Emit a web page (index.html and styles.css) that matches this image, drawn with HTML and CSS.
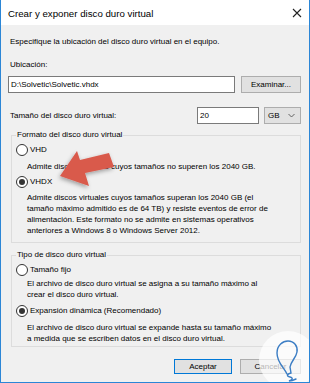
FILE: index.html
```html
<!DOCTYPE html>
<html lang="es">
<head>
    <meta charset="UTF-8">
    <meta name="viewport" content="width=device-width, initial-scale=1.0">
    <title>Crear y exponer disco duro virtual</title>
    <link rel="stylesheet" href="styles.css">
</head>
<body>
    <div class="window">
        <div class="titlebar">
            <span class="title">Crear y exponer disco duro virtual</span>
            <svg class="close" width="10" height="10" viewBox="0 0 10 10">
                <path d="M1 1 L9 9 M9 1 L1 9" stroke="#222" stroke-width="1.1" fill="none"/>
            </svg>
        </div>
        <div class="content">
            <div class="intro">Especifique la ubicación del disco duro virtual en el equipo.</div>
            <div class="label">Ubicación:</div>
            <div class="pathRow">
                <div class="textbox pathBox">D:\Solvetic\Solvetic.vhdx</div>
                <div class="button browseButton">Examinar...</div>
            </div>
            <div class="sizeRow">
                <div class="sizeLabel">Tamaño del disco duro virtual:</div>
                <div class="textbox sizeBox">20</div>
                <div class="select">
                    <span>GB</span>
                    <svg width="7" height="5" viewBox="0 0 7 5">
                        <path d="M0.5 1 L3.5 4 L6.5 1" stroke="#555" stroke-width="0.9" fill="none"/>
                    </svg>
                </div>
            </div>

            <fieldset class="group formatGroup">
                <legend>Formato del disco duro virtual</legend>
                <div class="radioRow firstRadio">
                    <span class="radio"></span>
                    <span>VHD</span>
                </div>
                <div class="desc oneLine">Admite discos virtuales cuyos tamaños no superen los 2040 GB.</div>
                <div class="radioRow">
                    <span class="radio checked"></span>
                    <span>VHDX</span>
                </div>
                <div class="desc">Admite discos virtuales cuyos tamaños superan los 2040 GB (el<br>tamaño máximo admitido es de 64 TB) y resiste eventos de error de<br>alimentación. Este formato no se admite en sistemas operativos<br>anteriores a Windows 8 o Windows Server 2012.</div>
            </fieldset>

            <fieldset class="group typeGroup">
                <legend>Tipo de disco duro virtual</legend>
                <div class="radioRow firstRadio">
                    <span class="radio"></span>
                    <span>Tamaño fijo</span>
                </div>
                <div class="desc fixedDesc">El archivo de disco duro virtual se asigna a su tamaño máximo al<br>crear el disco duro virtual.</div>
                <div class="radioRow dynamicRow">
                    <span class="radio checked"></span>
                    <span>Expansión dinámica (Recomendado)</span>
                </div>
                <div class="desc dynamicDesc">El archivo de disco duro virtual se expande hasta su tamaño máximo<br>a medida que se escriben datos en el disco duro virtual.</div>
            </fieldset>

            <div class="footer">
                <div class="button defaultButton">Aceptar</div>
                <div class="button cancelButton">Cancelar</div>
            </div>
        </div>

        <!-- red arrow pointing at VHDX -->
        <svg class="arrow" width="80" height="60" viewBox="40 140 80 60">
            <defs>
                <filter id="shade" x="-30%" y="-30%" width="160%" height="160%">
                    <feDropShadow dx="-1" dy="2" stdDeviation="2" flood-color="#000" flood-opacity="0.35"/>
                </filter>
            </defs>
            <polygon points="59,176 76,151 79,160 108,153 113,167 84,173 88,186" fill="#d95a4c" filter="url(#shade)"/>
        </svg>

        <!-- watermark -->
        <svg class="mark" width="62" height="62" viewBox="0 0 62 62">
            <circle cx="31" cy="31" r="29" fill="#fff" fill-opacity="0.7"/>
            <path d="M30 45 C27 38 20 34 20 24 C20 16 26 12 31 12 C37 12 41 17 40 23 C39 29 34 32 33 38 L34 44 C30 45 29 47 33 48 C37 49 35 51 32 52 C35 52 37 51 39 50" stroke="#3b7dc4" stroke-width="1.4" fill="none" stroke-linecap="round"/>
        </svg>
    </div>
</body>
</html>
```

FILE: styles.css
```css
body {
    margin: 0;
    font-family: "Liberation Sans", Arial, sans-serif;
    font-size: 8px;
    color: #000;
}

.window {
    position: relative;
    width: 310px;
    height: 383px;
    box-sizing: border-box;
    background-color: #f0f0f0;
    border: 1px solid #2b86d6;
    border-top: none;
    overflow: hidden;
}

.titlebar {
    height: 25px;
    background-color: #fff;
    display: flex;
    align-items: center;
    justify-content: space-between;
    padding: 0 7px 0 7px;
}

.title {
    font-size: 9.7px;
    padding-top: 1px;
}

.close {
    margin-top: 1px;
}

.content {
    padding: 0 8px 0 7px;
}

.intro {
    margin-top: 10px;
    line-height: 13px;
    padding-left: 2px;
}

.label {
    margin-top: 10px;
    line-height: 13px;
    padding-left: 2px;
}

.pathRow {
    display: flex;
    gap: 6px;
    margin-top: 5px;
}

.textbox {
    box-sizing: border-box;
    height: 17px;
    line-height: 15px;
    background-color: #fff;
    border: 1px solid #7a7a7a;
    padding-left: 2px;
}

.pathBox {
    width: 227px;
}

.button {
    box-sizing: border-box;
    height: 17px;
    line-height: 15px;
    background-color: #e1e1e1;
    border: 1px solid #adadad;
    text-align: center;
}

.browseButton {
    width: 60px;
}

.sizeRow {
    display: flex;
    align-items: center;
    margin-top: 14px;
}

.sizeLabel {
    flex: 1;
    padding-left: 2px;
}

.sizeBox {
    width: 62px;
}

.select {
    box-sizing: border-box;
    width: 37px;
    height: 17px;
    margin-left: 5px;
    background-color: #e1e1e1;
    border: 1px solid #adadad;
    display: flex;
    align-items: center;
    justify-content: space-between;
    padding: 0 5px 0 3px;
}

.group {
    margin: 6px 0 0 3px;
    padding: 0 0 6px 0;
    border: 1px solid #dcdcdc;
    min-width: 0;
}

.group legend {
    margin-left: 4px;
    padding: 0 1px;
    line-height: 10px;
    height: 10px;
}

.typeGroup {
    margin-top: 7px;
    padding-bottom: 2px;
}

.radioRow {
    display: flex;
    align-items: center;
    gap: 2px;
    height: 13px;
    margin-top: 3px;
    padding-left: 4px;
}

.firstRadio {
    margin-top: 3px;
}

.radio {
    box-sizing: border-box;
    width: 12px;
    height: 12px;
    border: 1px solid #333;
    border-radius: 50%;
    background-color: #fff;
    position: relative;
}

.radio.checked::after {
    content: "";
    position: absolute;
    left: 2px;
    top: 2px;
    width: 6px;
    height: 6px;
    border-radius: 50%;
    background-color: #333;
}

.desc {
    margin: 4px 0 0 15px;
    line-height: 11px;
}

.oneLine {
    margin-top: 5px;
}

.fixedDesc {
    margin-top: 2px;
}

.dynamicRow {
    margin-top: 4px;
}

.dynamicDesc {
    margin-top: 5px;
}

.footer {
    display: flex;
    justify-content: flex-end;
    gap: 8px;
    margin-top: 12px;
}

.footer .button {
    height: 15px;
    line-height: 13px;
}

.defaultButton {
    width: 58px;
    border-color: #0078d7;
}

.cancelButton {
    width: 61px;
}

.arrow {
    position: absolute;
    left: 40px;
    top: 140px;
}

.mark {
    position: absolute;
    left: 256px;
    top: 329px;
}
```
